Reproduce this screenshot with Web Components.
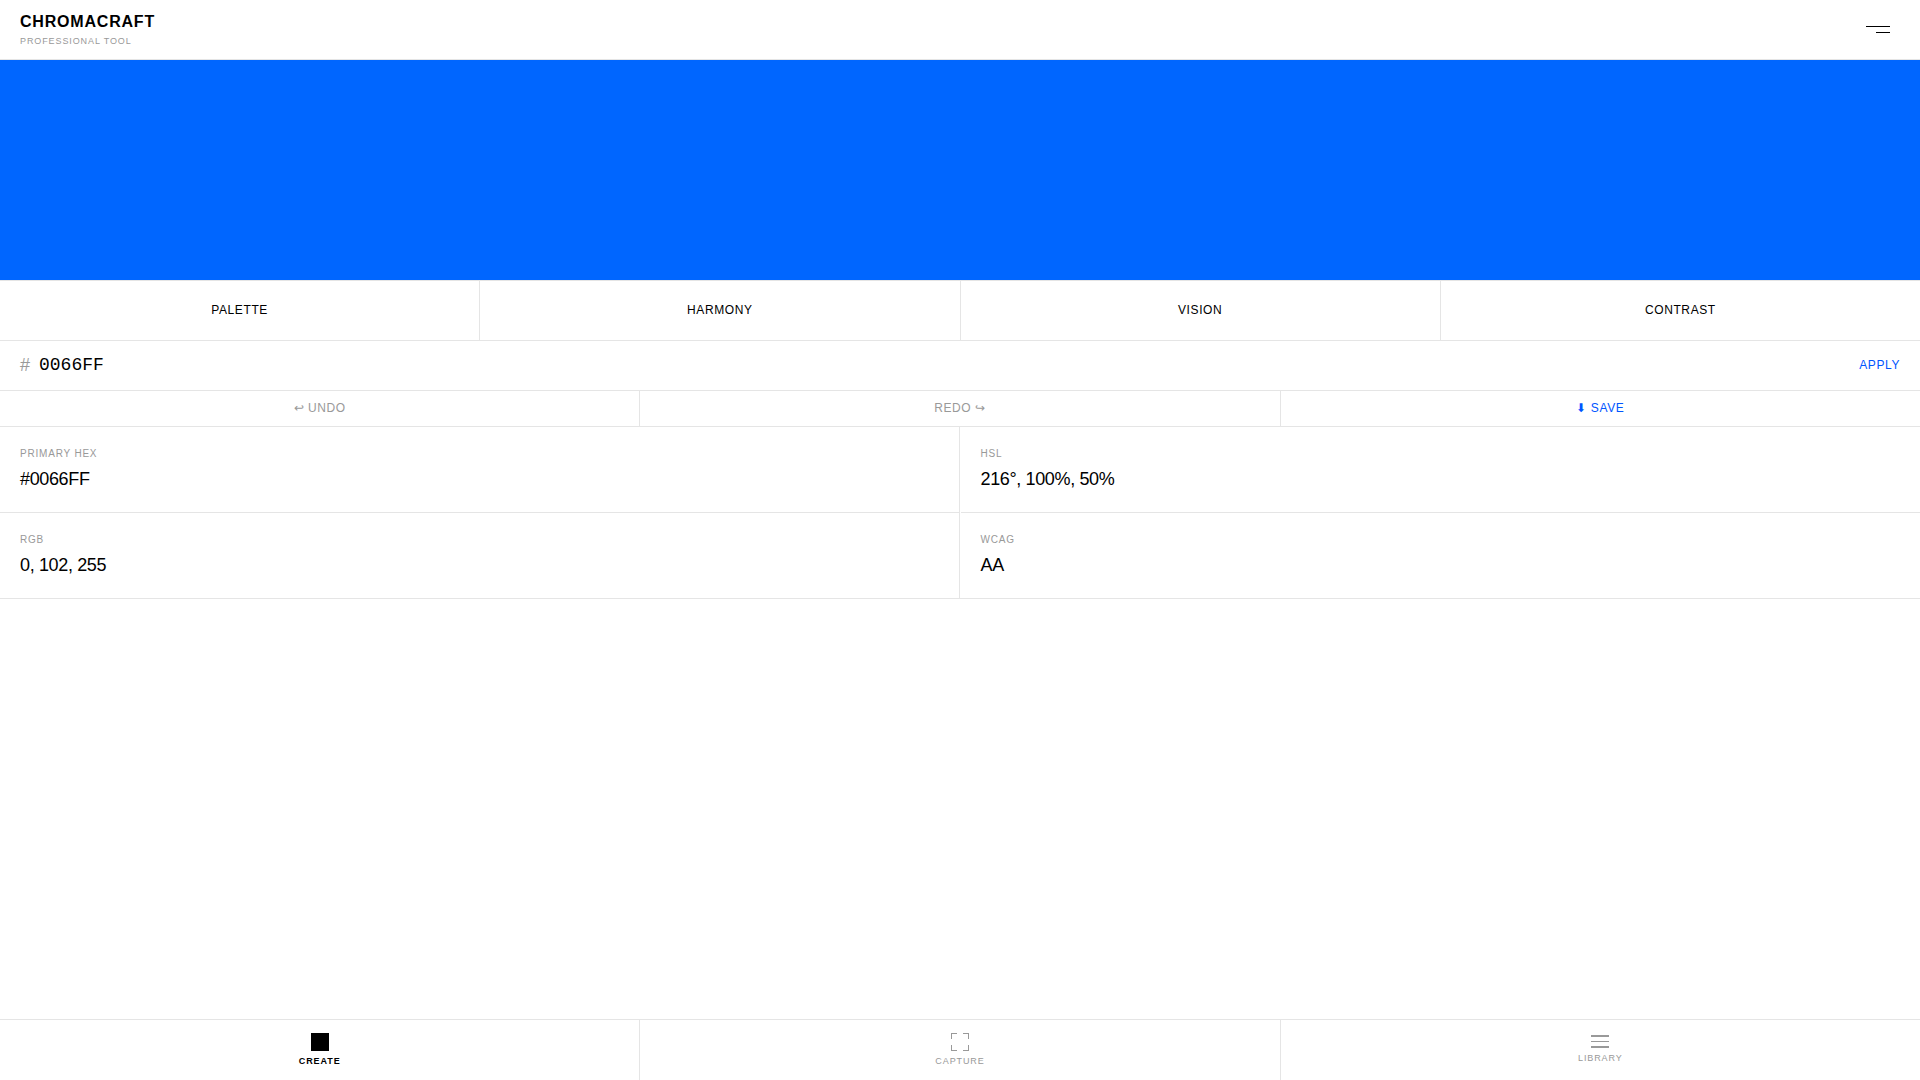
<!DOCTYPE html>
<html lang="en">
<head>
<meta charset="utf-8">
<meta name="viewport" content="width=device-width, initial-scale=1">
<title>Chromacraft</title>
<style>
  :root { --line: #e5e5e5; --muted: #999999; --swatch: #0066ff; --accent: #0055ff; --ink: #000000; --paper: #ffffff; }
  body { margin: 0; background: var(--paper); color: var(--ink); font-family: "Liberation Sans", Arial, sans-serif; font-size: 12px; }
</style>
</head>
<body>
<chroma-app></chroma-app>
<script>
const base = `
  *, *::before, *::after { box-sizing: border-box; }
  button { margin: 0; padding: 0; border: 0; background: none; font: inherit; color: inherit; letter-spacing: inherit; cursor: pointer; }
`;

function define(name, markup) {
  const template = document.createElement("template");
  template.innerHTML = `<style>${base}</style>${markup}`;
  customElements.define(name, class extends HTMLElement {
    constructor() {
      super();
      this.attachShadow({ mode: "open" }).append(template.content.cloneNode(true));
    }
  });
}

define("chroma-header", `
  <style>
    :host { display: block; border-bottom: 1px solid var(--line); }
    header { display: flex; align-items: center; justify-content: space-between; padding: 12px 20px; }
    .brand { display: flex; flex-direction: column; gap: 4px; }
    h1 { margin: 0; font-size: 16px; line-height: 20px; font-weight: 700; letter-spacing: 0.05em; }
    p { margin: 0; font-size: 9px; line-height: 11px; letter-spacing: 0.1em; color: var(--muted); }
    button { display: flex; flex-direction: column; align-items: flex-end; gap: 5px; padding: 10px; }
    i { display: block; height: 1px; width: 24px; background: var(--ink); }
    i + i { width: 14px; }
  </style>
  <header>
    <div class="brand"><h1>CHROMACRAFT</h1><p>PROFESSIONAL TOOL</p></div>
    <button type="button" aria-label="Menu"><i></i><i></i></button>
  </header>
`);

define("color-swatch", `
  <style>:host { display: block; height: 220px; background: var(--swatch); }</style>
`);

/* A row of equal cells with hairlines between them. */
define("cell-row", `
  <style>
    :host { display: grid; grid-auto-flow: column; grid-auto-columns: minmax(0, 1fr); gap: 1px; background: var(--line); border-bottom: 1px solid var(--line); }
    :host([ruled]) { border-top: 1px solid var(--line); }
  </style>
  <slot></slot>
`);

define("tool-button", `
  <style>
    :host { display: block; background: var(--paper); font-size: 12px; line-height: 15px; letter-spacing: 0.05em; }
    button { display: block; width: 100%; padding: 22px 8px; }
    :host([compact]) button { padding: 10px 8px; }
    :host([tone="muted"]) { color: var(--muted); }
    :host([tone="accent"]) { color: var(--accent); }
  </style>
  <button type="button"><slot></slot></button>
`);

define("hex-field", `
  <style>
    :host { display: block; border-bottom: 1px solid var(--line); }
    form { display: flex; align-items: center; gap: 8px; padding: 12px 20px 13px; }
    label { font-size: 18px; line-height: 24px; color: var(--muted); }
    input { flex: 1; min-width: 0; height: 24px; margin: 0; padding: 0 1px; border: 0; outline: 0; background: none; color: var(--ink); font: 18px/24px "Liberation Mono", monospace; }
    button { color: var(--accent); font-size: 12px; line-height: 14px; letter-spacing: 0.05em; }
  </style>
  <form onsubmit="return false">
    <label for="hex">#</label>
    <input id="hex" type="text" value="0066FF" maxlength="6" spellcheck="false" autocomplete="off">
    <button type="submit">APPLY</button>
  </form>
`);

define("metric-grid", `
  <style>:host { display: grid; grid-template-columns: repeat(2, minmax(0, 1fr)); column-gap: 1px; background: linear-gradient(var(--line), var(--line)) left bottom / 100% 1px no-repeat; }</style>
  <slot></slot>
`);

define("metric-cell", `
  <style>
    :host { display: flex; flex-direction: column; gap: 6px; padding: 20px; border-bottom: 1px solid var(--line); box-sizing: border-box; }
    :host(:nth-child(odd)) { border-right: 1px solid var(--line); }
    .label { font-size: 10px; line-height: 14px; letter-spacing: 0.08em; color: var(--muted); }
    .value { font-size: 18px; line-height: 25px; letter-spacing: -0.02em; }
  </style>
  <div class="label"><slot name="label"></slot></div>
  <div class="value"><slot></slot></div>
`);

define("nav-button", `
  <style>
    :host { display: block; background: var(--paper); color: var(--muted); font-size: 9px; line-height: 12px; letter-spacing: 0.1em; }
    :host([active]) { color: var(--ink); font-weight: 700; }
    button { display: flex; flex-direction: column; align-items: center; justify-content: center; gap: 4px; width: 100%; height: 60px; padding-bottom: 1px; }
    ::slotted(svg) { display: block; }
  </style>
  <button type="button"><slot name="icon"></slot><span><slot></slot></span></button>
`);

define("chroma-app", `
  <style>
    :host { display: flex; flex-direction: column; min-height: 100vh; }
    main { flex: 1; }
    nav { position: sticky; bottom: 0; }
    nav cell-row { border-bottom: 0; }
  </style>
  <chroma-header></chroma-header>
  <main>
    <color-swatch></color-swatch>
    <cell-row ruled>
      <tool-button>PALETTE</tool-button>
      <tool-button>HARMONY</tool-button>
      <tool-button>VISION</tool-button>
      <tool-button>CONTRAST</tool-button>
    </cell-row>
    <hex-field></hex-field>
    <cell-row>
      <tool-button compact tone="muted">↩ UNDO</tool-button>
      <tool-button compact tone="muted">REDO ↪</tool-button>
      <tool-button compact tone="accent">⬇ SAVE</tool-button>
    </cell-row>
    <metric-grid>
      <metric-cell><span slot="label">PRIMARY HEX</span>#0066FF</metric-cell>
      <metric-cell><span slot="label">HSL</span>216°, 100%, 50%</metric-cell>
      <metric-cell><span slot="label">RGB</span>0, 102, 255</metric-cell>
      <metric-cell><span slot="label">WCAG</span>AA</metric-cell>
    </metric-grid>
  </main>
  <nav>
    <cell-row ruled>
      <nav-button active>
        <svg slot="icon" width="18" height="18" viewBox="0 0 18 18" shape-rendering="crispEdges" aria-hidden="true"><path fill="currentColor" d="M0 0h18v18H0z"/></svg>CREATE
      </nav-button>
      <nav-button>
        <svg slot="icon" width="18" height="18" viewBox="0 0 18 18" fill="currentColor" shape-rendering="crispEdges" aria-hidden="true"><path d="M0 0h6v1H1v5H0zM12 0h6v6h-1V1h-5zM17 12h1v6h-6v-1h5zM0 12h1v5h5v1H0z"/></svg>CAPTURE
      </nav-button>
      <nav-button>
        <svg slot="icon" width="18" height="13" viewBox="0 0 18 13" fill="currentColor" shape-rendering="crispEdges" aria-hidden="true"><path d="M0 0h18v2H0zM0 6h18v1H0zM0 11h18v2H0z"/></svg>LIBRARY
      </nav-button>
    </cell-row>
  </nav>
`);
</script>
</body>
</html>
